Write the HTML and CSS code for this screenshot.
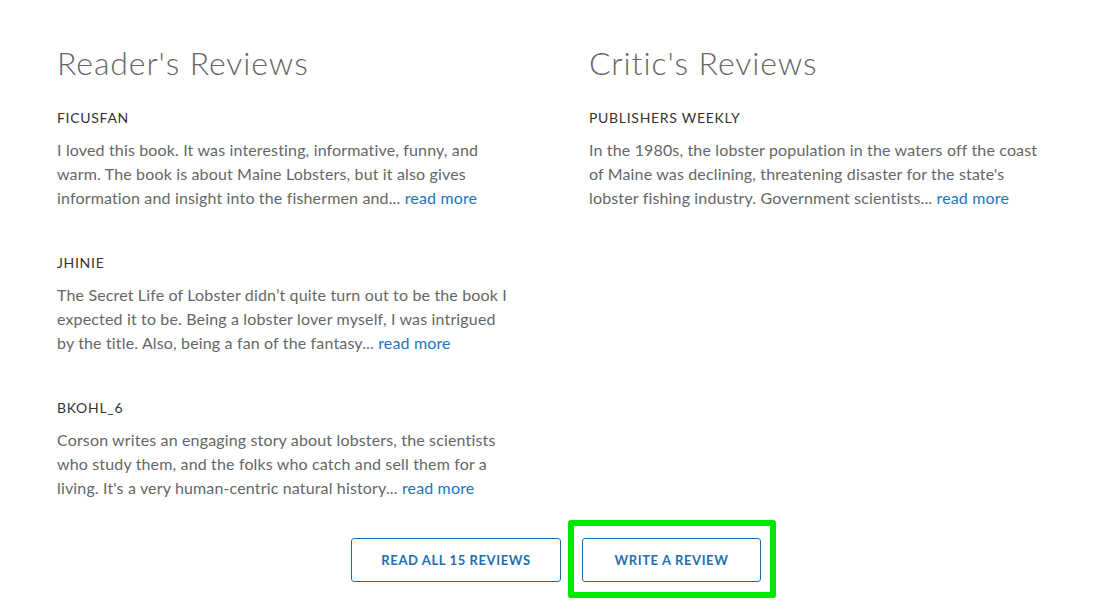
FILE: index.html
```
<!DOCTYPE html>
<html>
<head>
	<meta charset="utf-8">
	<title>Reviews</title>
	<link rel="stylesheet" href="styles.css">
</head>
<body>
	<div class = "reviews">
		<div class = "column">
			<h2>Reader's Reviews</h2>
			<div class = "review">
				<p class = "name">FICUSFAN</p>
				<p class = "text">I loved this book. It was interesting, informative, funny, and<br>warm. The book is about Maine Lobsters, but it also gives<br>information and insight into the fishermen and... <a href="#">read more</a></p>
			</div>
			<div class = "review">
				<p class = "name">JHINIE</p>
				<p class = "text">The Secret Life of Lobster didn’t quite turn out to be the book I<br>expected it to be. Being a lobster lover myself, I was intrigued<br>by the title. Also, being a fan of the fantasy... <a href="#">read more</a></p>
			</div>
			<div class = "review">
				<p class = "name">BKOHL_6</p>
				<p class = "text">Corson writes an engaging story about lobsters, the scientists<br>who study them, and the folks who catch and sell them for a<br>living. It's a very human-centric natural history... <a href="#">read more</a></p>
			</div>
		</div>
		<div class = "column">
			<h2>Critic's Reviews</h2>
			<div class = "review">
				<p class = "name">PUBLISHERS WEEKLY</p>
				<p class = "text">In the 1980s, the lobster population in the waters off the coast<br>of Maine was declining, threatening disaster for the state's<br>lobster fishing industry. Government scientists... <a href="#">read more</a></p>
			</div>
		</div>
	</div>
	<div class = "buttons">
		<button class = "btn read-all">READ ALL 15 REVIEWS</button>
		<div class = "focus">
			<button class = "btn write">WRITE A REVIEW</button>
			<span class = "highlight"></span>
		</div>
	</div>
</body>
</html>
```
FILE: styles.css
```
*{
	margin:0;
	padding:0;
	box-sizing:border-box;
	font-family:"Lato", "Open Sans", sans-serif;
}

body{
	background:white;
	width:1114px;
	min-height:612px;
}

.reviews{
	display:grid;
	grid-template-columns:532px 1fr;
	padding:45px 0 0 57px;
}

.column h2{
	font-size:32px;
	font-weight:300;
	line-height:36px;
	color:#666;
	margin-bottom:27px;
	letter-spacing:0.9px;
}

.review{
	margin-bottom:43px;
}

.review .name{
	font-size:14px;
	line-height:20px;
	color:#333;
	margin-bottom:10px;
	letter-spacing:0.7px;
}

.review .text{
	font-size:16px;
	line-height:24px;
	color:#666;
	letter-spacing:0.15px;
	white-space:nowrap;
}

.review .text a{
	color:#1a76c0;
	text-decoration:none;
}

.buttons{
	display:flex;
	justify-content:center;
	gap:21px;
	margin-top:-5px;
	padding-right:2px;
}

.btn{
	height:44px;
	background:white;
	border:1px solid #1f6fae;
	border-radius:3px;
	color:#1f6fae;
	font-size:13px;
	font-weight:700;
	letter-spacing:0.6px;
	white-space:nowrap;
	padding:0;
}

.read-all{
	width:210px;
}

.write{
	width:179px;
}

.focus{
	position:relative;
	display:flex;
}

.highlight{
	position:absolute;
	top:-18px;
	left:-14px;
	right:-15px;
	bottom:-16px;
	border:6px solid #00e600;
	border-radius:3px;
}
```
